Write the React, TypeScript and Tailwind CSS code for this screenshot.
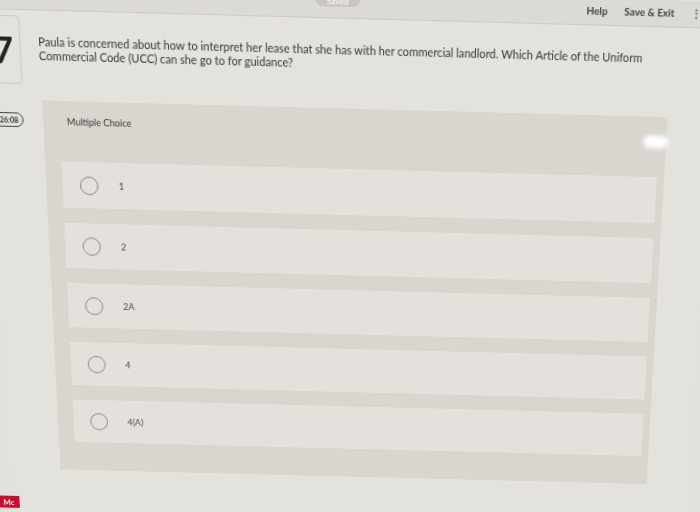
const OPTIONS = [
  { id: "a", label: "1" },
  { id: "b", label: "2" },
  { id: "c", label: "2A" },
  { id: "d", label: "4" },
  { id: "e", label: "4(A)" },
];

export default function App() {
  return (
    <div className="relative h-[512px] w-[700px] overflow-hidden bg-[#e3e1dc] [font-family:Lato,'Liberation_Sans',sans-serif]">
      {/* the screen, photographed at a slight angle */}
      <div className="flex h-[560px] w-[700px] origin-[233px_300px] flex-col bg-[#e4e2dd] [transform:perspective(1000px)_rotateX(-10deg)_skewX(1deg)_skewY(1.5deg)]">
        {/* Header */}
        <header className="flex h-[25px] shrink-0 items-start border-b border-[#cfccc6] bg-[#dcdad4]">
          <div className="ml-[316px] flex h-[14px] w-[43px] items-end justify-center rounded-b-[7px] bg-[#c9c6c0] pb-[1px] text-[8px] font-bold leading-none text-[#f4f3f0]">
            Saved
          </div>
          <div className="ml-auto flex h-full items-center gap-[16px] pr-[16px] text-[9.5px] font-bold text-[#3d3d3d]">
            <span>Help</span>
            <span>Save &amp; Exit</span>
            <span>⋮</span>
          </div>
        </header>

        {/* Question */}
        <div className="mt-[5px] flex items-start">
          <div className="-ml-[12px] flex h-[64px] w-[46px] shrink-0 items-center justify-end rounded-r-[4px] border border-[#cfccc6] pr-[6px] text-[34px] font-bold leading-none text-[#222]">
            7
          </div>
          <p className="ml-[17px] mt-[17px] w-[600px] text-[10.7px] leading-[13px] text-[#383838]">
            Paula is concerned about how to interpret her lease that she has with her commercial landlord. Which Article of the Uniform
            Commercial Code (UCC) can she go to for guidance?
          </p>
        </div>

        {/* Timer + answer panel */}
        <div className="mt-[15px] flex items-start">
          <div className="-ml-[10px] mt-[12px] flex h-[14px] w-[43px] shrink-0 items-center justify-end rounded-full border border-[#4a4a4a] pr-[4px] text-[7px] font-bold text-[#333]">
            26:08
          </div>
          <section className="relative ml-[19px] h-[373px] w-[605px] bg-[#d9d6d0] px-[13px] pt-[14px]">
            <div className="pointer-events-none absolute left-[583px] top-[18px] h-[12px] w-[24px] rounded-full bg-white blur-[2px]" />
            <h2 className="ml-[10px] text-[9px] leading-[12px] text-[#3a3a3a]">Multiple Choice</h2>
            <div className="ml-[3px] mt-[32px] flex w-[582px] flex-col gap-[15px]">
              {OPTIONS.map((o) => (
                <label key={o.id} className="flex h-[45px] items-center gap-[20px] bg-[#e4e1dc] pl-[17px]">
                  <span className="h-[18px] w-[18px] shrink-0 rounded-full border-[1.5px] border-[#8d8b88]" />
                  <span className="text-[9px] text-[#4a4a4a]">{o.label}</span>
                </label>
              ))}
            </div>
          </section>
        </div>

        {/* brand tag */}
        <div className="-ml-[14px] mt-[30px] flex h-[13px] w-[22px] items-center justify-center bg-[#c8102e] text-[8px] font-bold text-white">
          Mc
        </div>
      </div>
    </div>
  );
}
